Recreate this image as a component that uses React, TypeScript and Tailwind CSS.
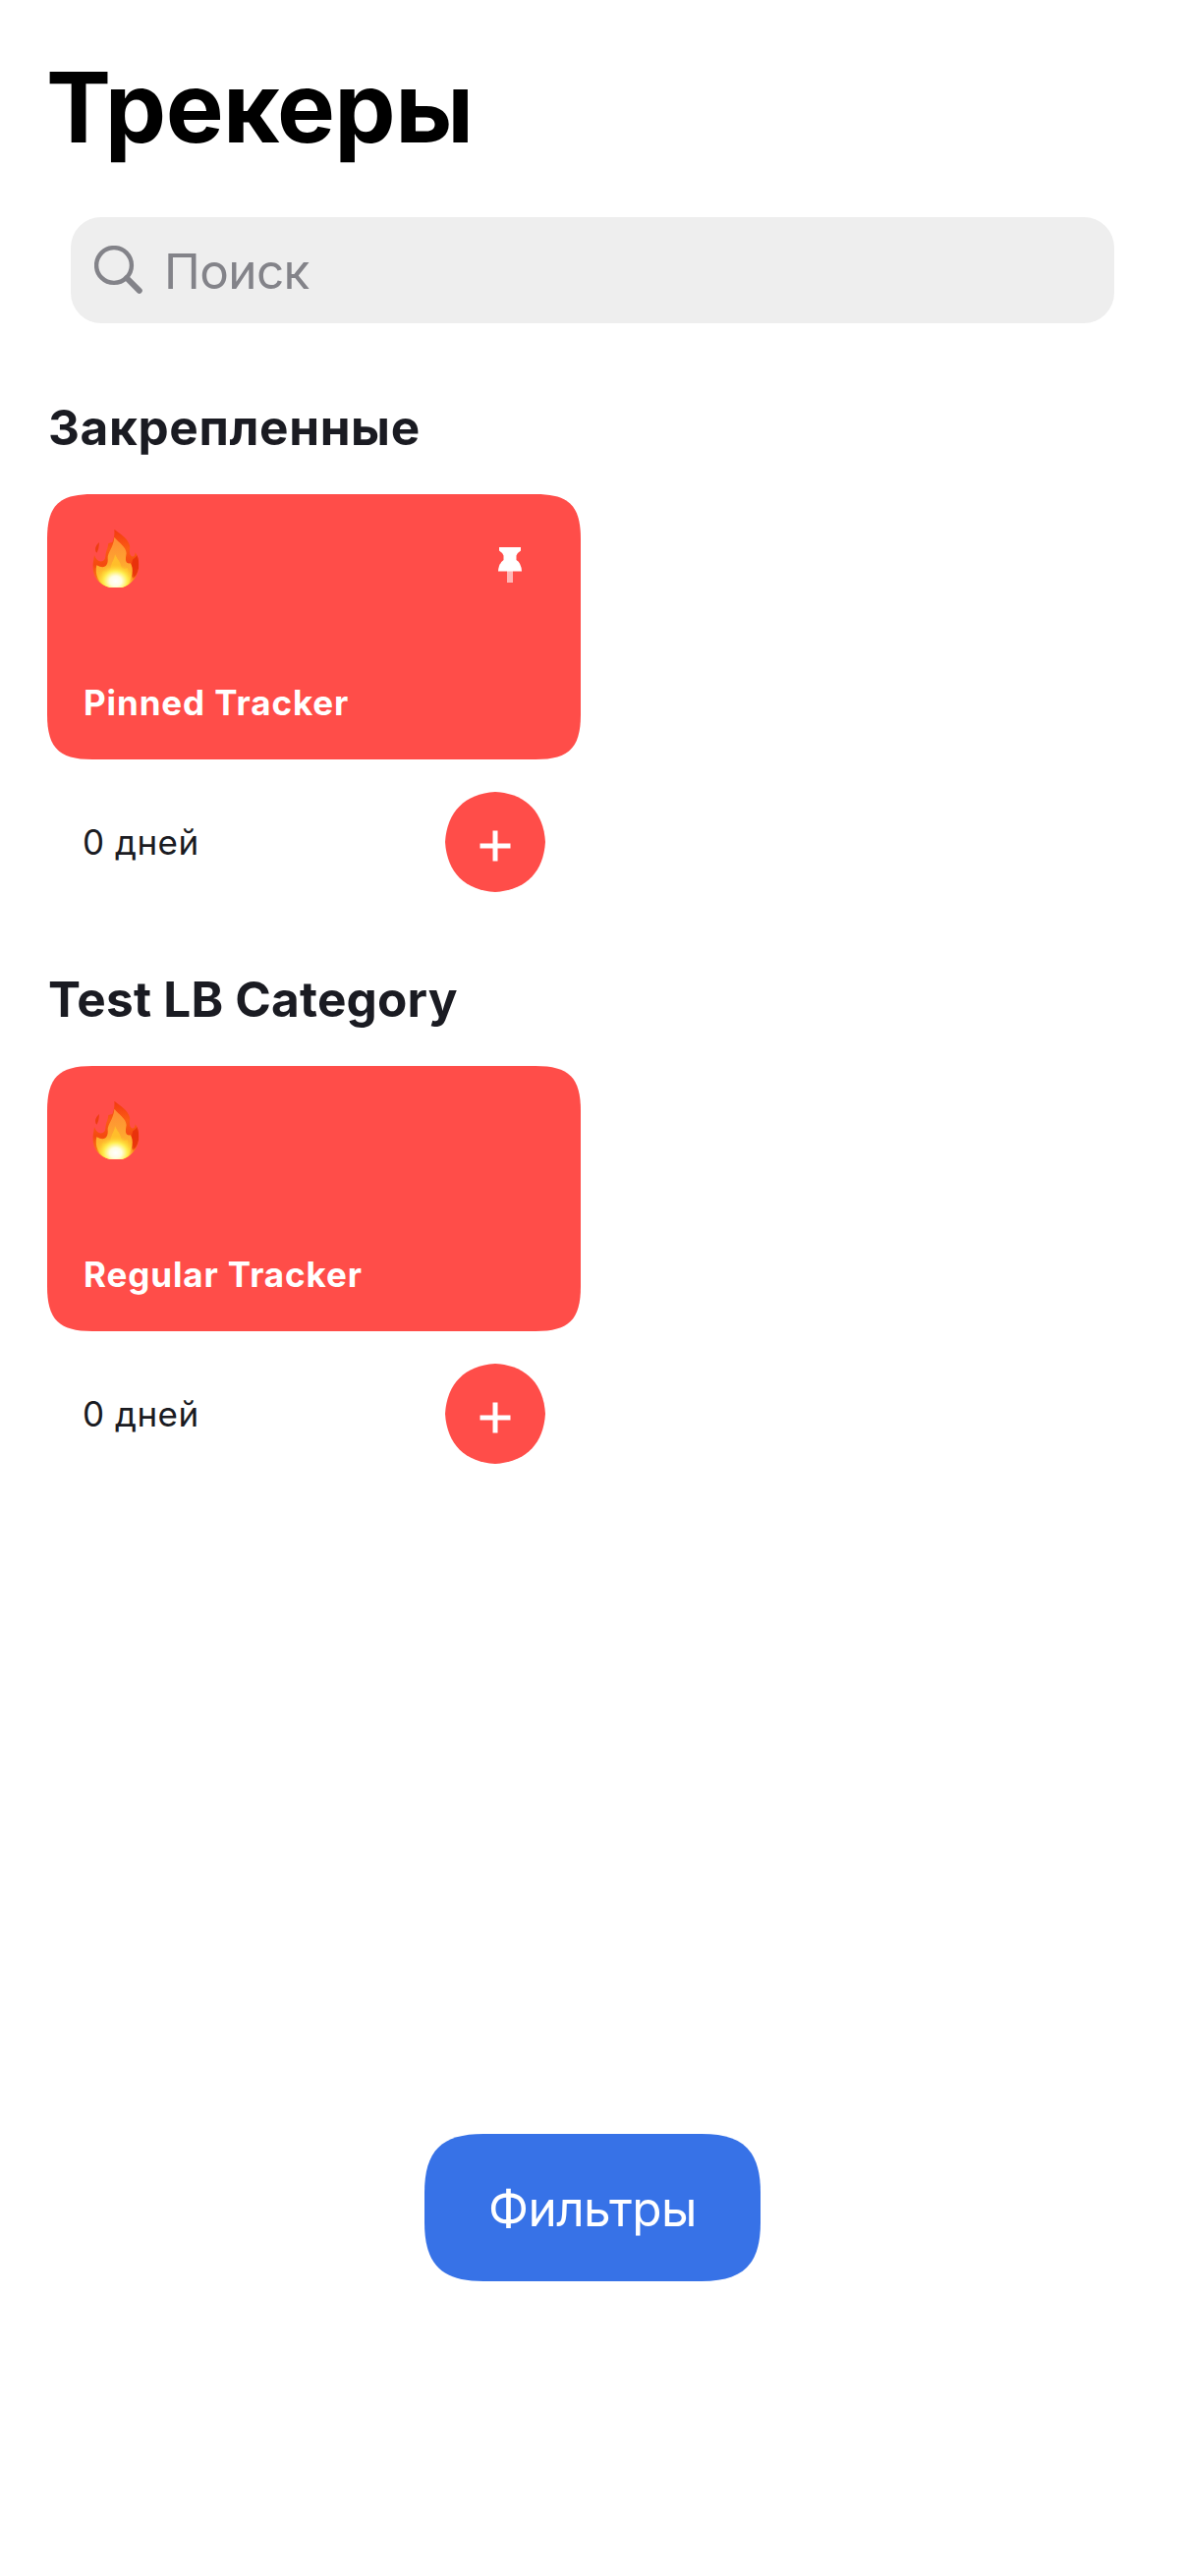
import type { ReactNode } from "react";

function SearchIcon() {
  return (
    <svg className="h-[50px] w-[50px] shrink-0" viewBox="0 0 50 50" fill="none" stroke="#838389" aria-hidden="true">
      <circle cx="20" cy="20" r="17.9" strokeWidth="4.400" />
      <path d="M33 33 L45.8 45.8" strokeWidth="6" strokeLinecap="round" />
    </svg>
  );
}

function FlameIcon() {
  return (
    <svg className="h-[80px] w-[80px]" viewBox="0 0 240 240" aria-hidden="true">
      <defs>
        <linearGradient id="flameOuter" x1="0" y1="0" x2="0" y2="1">
          <stop offset="0" stopColor="#f2350f" />
          <stop offset="0.35" stopColor="#fb5c14" />
          <stop offset="0.6" stopColor="#f44a10" />
          <stop offset="0.85" stopColor="#fc7a18" />
          <stop offset="1" stopColor="#ffa42a" />
        </linearGradient>
        <linearGradient id="flameMid" x1="0" y1="0" x2="0" y2="1">
          <stop offset="0" stopColor="#fe8a34" />
          <stop offset="0.5" stopColor="#fea530" />
          <stop offset="1" stopColor="#ffd026" />
        </linearGradient>
        <radialGradient id="flameCore" cx="0.5" cy="0.62" r="0.5">
          <stop offset="0" stopColor="#ffffff" />
          <stop offset="0.3" stopColor="#fffde0" />
          <stop offset="0.6" stopColor="#ffee50" />
          <stop offset="1" stopColor="#ffc528" stopOpacity="0" />
        </radialGradient>
        <clipPath id="flameClip">
          <path d="M109 26 C126 39 151 54 156 76 C158 88 152 100 161 108 C170 113 172 105 173 97 C182 108 186 128 183 146 C181 161 174 174 165 184 C157 193 147 200 133 204 H95 C80 200 65 192 57 181 C44 165 40 140 46 119 L48 105 C53 121 64 127 74 123 C84 118 81 108 84 96 C88 84 90 78 91 69 L103 66 C109 52 110 40 109 26Z" />
        </clipPath>
      </defs>
      <path d="M63 66 C52 76 47 88 55 98 C60 91 62 82 63 66Z" fill="#ee3d12" />
      <g clipPath="url(#flameClip)">
        <rect x="38" y="20" width="152" height="190" fill="url(#flameOuter)" />
        <path d="M166 118 C176 112 180 102 181 104 C188 130 185 162 166 176 L156 160 C165 146 160 130 166 118Z" fill="#e62c0a" opacity="0.8" />
        <path d="M109 50 C122 66 145 80 146 99 C144 114 139 132 158 130 C170 146 164 178 148 196 L138 204 H90 C62 194 48 164 55 136 C80 150 91 136 89 115 C88 96 106 84 109 50Z" fill="url(#flameMid)" />
        <path d="M111 102 C118 118 128 126 130 141 C136 150 145 146 150 144 C155 166 148 190 132 204 H94 C76 192 68 170 74 153 C87 161 97 153 99 139 C101 126 110 117 111 102Z" fill="#ffc62a" opacity="0.75" />
        <ellipse cx="113" cy="172" rx="60" ry="52" fill="url(#flameCore)" />
      </g>
    </svg>
  );
}

function PinIcon() {
  return (
    <svg className="mt-[10px] h-[38px] w-[26px]" viewBox="0 0 26 38" aria-hidden="true">
      <path d="M2 1 H24 V4.500 Q20 7 19.500 9.500 V14 Q24.500 17 25 25.500 H1 Q1.500 17 6.500 14 V9.500 Q6 7 2 4.500Z" fill="#fff" />
      <path d="M10 25 H16 V37 H10Z" fill="#fff" opacity="0.6" />
    </svg>
  );
}

function PlusIcon() {
  return (
    <svg className="mt-2 h-8 w-8" viewBox="0 0 32 32" fill="none" stroke="#fff" strokeWidth="5" aria-hidden="true">
      <path d="M16 0.500 V31.500 M0.500 16 H31.500" />
    </svg>
  );
}

function TrackerCard({ name, pinned = false }: { name: string; pinned?: boolean }) {
  return (
    <article className="w-[543px]">
      <div className="flex h-[270px] flex-col justify-between bg-[#ff4d49] pb-[37px] pl-[37px] pr-[59px] pt-[27px] [clip-path:path('M0,46C0,11.8,11.8,0,46,0H497C531.2,0,543,11.8,543,46V224C543,258.2,531.2,270,497,270H46C11.8,270,0,258.2,0,224Z')]">
        <div className="flex items-center justify-between">
          <div className="-ml-[5px]">
            <FlameIcon />
          </div>
          {pinned && <PinIcon />}
        </div>
        <p className="whitespace-nowrap text-[35px] font-bold leading-[42px] tracking-[0.9px] text-white">{name}</p>
      </div>
      <div className="mt-[33px] flex h-[102px] items-center justify-between pl-[36px] pr-[36px]">
        <span className="text-[35px] leading-[42px] tracking-[0.5px] text-[#1a1b22]">0 дней</span>
        <button
          aria-label="Добавить"
          className="flex h-[102px] w-[102px] items-center justify-center bg-[#ff4d49] [clip-path:path('M0,51C2,20,20,2,51,0C82,2,100,20,102,51C100,82,82,100,51,102C20,100,2,82,0,51Z')]"
        >
          <PlusIcon />
        </button>
      </div>
    </article>
  );
}

function Category({ title, children }: { title: ReactNode; children: ReactNode }) {
  return (
    <section>
      <h2 className="mb-[38px] whitespace-nowrap pl-px text-[49.5px] font-bold leading-[60px] text-[#1a1b22]">{title}</h2>
      {children}
    </section>
  );
}

export default function App() {
  return (
    <main className="flex h-[2622px] w-[1206px] flex-col bg-white px-[48px] pt-[49px] font-['Inter',sans-serif]">
      <h1 className="-ml-px text-[99px] font-bold leading-[120px] tracking-[-0.6px] text-black">Трекеры</h1>
      <label className="mx-[24px] mt-[52px] flex h-[108px] items-center rounded-[31px] bg-[#eeeeee] pl-[24px]">
        <SearchIcon />
        <span className="ml-[21px] mt-[2px] text-[49.5px] leading-[60px] tracking-[-0.6px] text-[#838389]">Поиск</span>
      </label>
      <div className="mt-[76px] flex flex-col gap-[79px]">
        <Category title={<span className="tracking-[0.65px]">Закрепленные</span>}>
          <TrackerCard name="Pinned Tracker" pinned />
        </Category>
        <Category title={<span className="tracking-[0.2px]">Test LB Category</span>}>
          <TrackerCard name="Regular Tracker" />
        </Category>
      </div>
      <button className="mb-[300px] mt-auto flex h-[150px] w-[342px] items-center justify-center self-center bg-[#3772e7] pt-[2px] text-[49.5px] leading-[60px] tracking-[-0.6px] text-white [clip-path:path('M0,60C0,17.3,17.3,0,60,0H282C324.7,0,342,17.3,342,60V90C342,132.7,324.7,150,282,150H60C17.3,150,0,132.7,0,90Z')]">
        Фильтры
      </button>
    </main>
  );
}
